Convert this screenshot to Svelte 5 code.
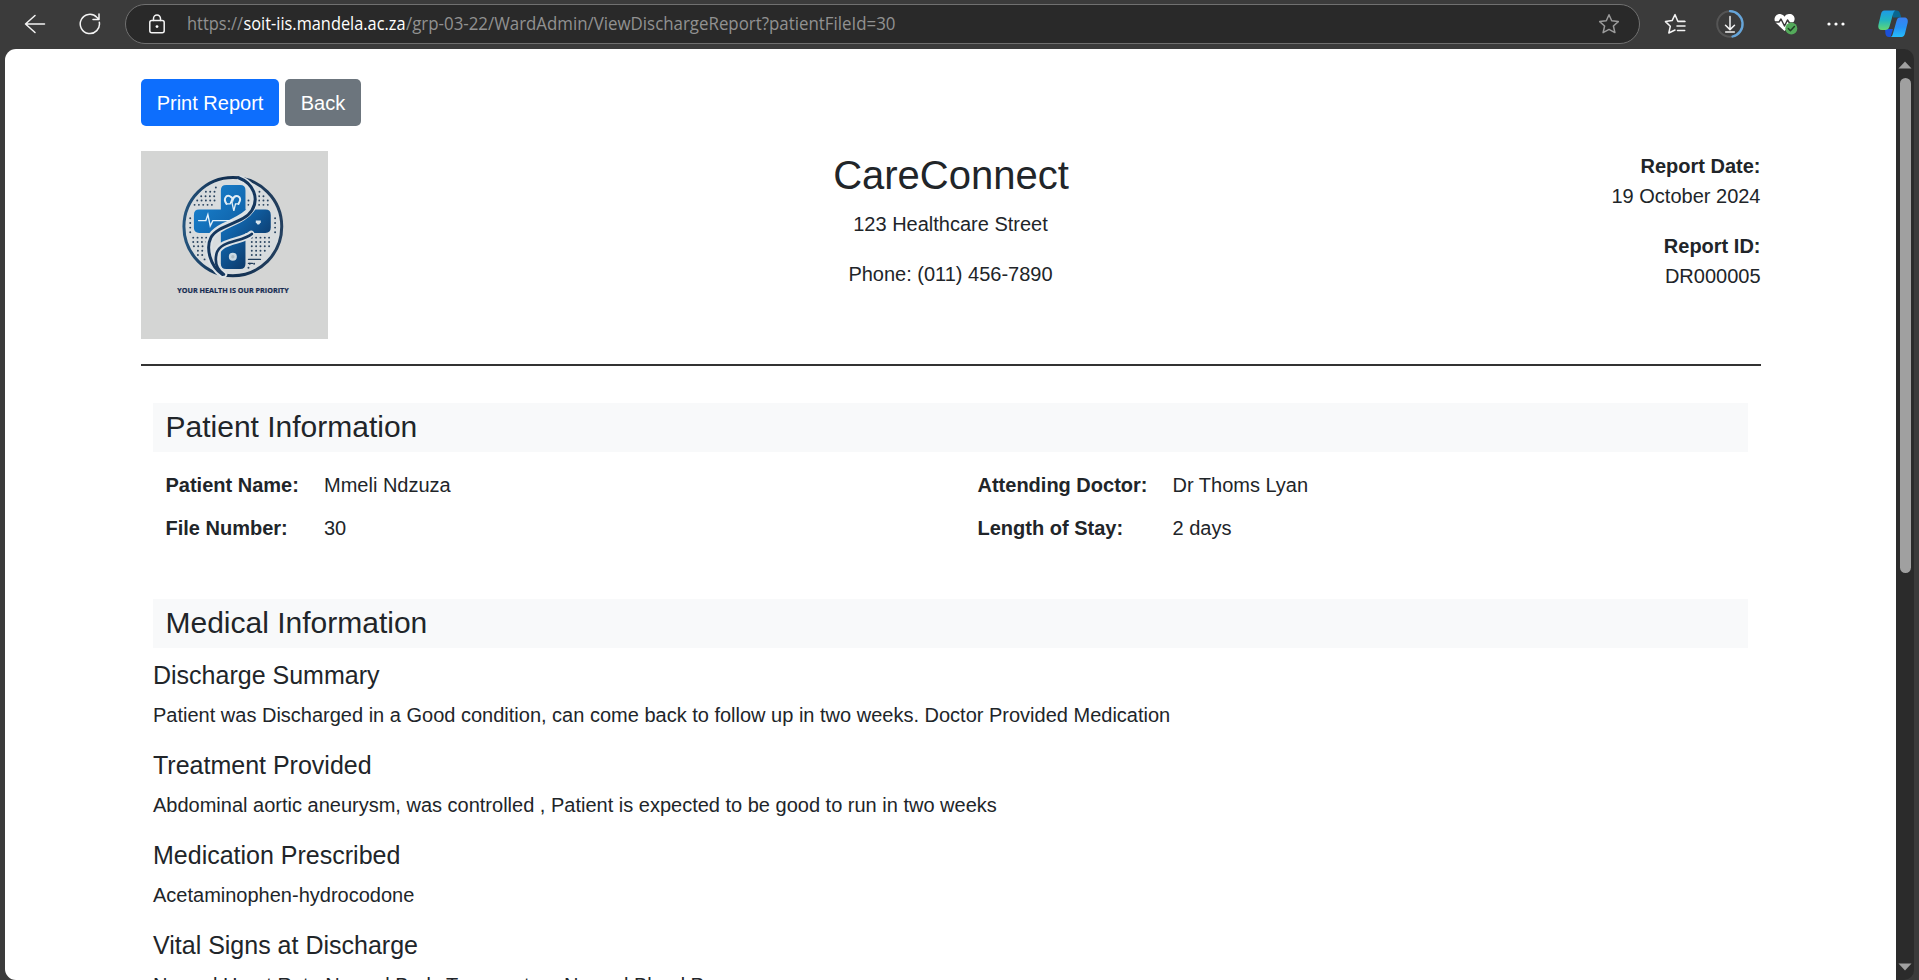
<script>
  const patient = [
    ['Patient Name:', 'Mmeli Ndzuza', 'Attending Doctor:', 'Dr Thoms Lyan'],
    ['File Number:', '30', 'Length of Stay:', '2 days'],
  ];
  const medical = [
    ['Discharge Summary', 'Patient was Discharged in a Good condition, can come back to follow up in two weeks. Doctor Provided Medication'],
    ['Treatment Provided', 'Abdominal aortic aneurysm, was controlled , Patient is expected to be good to run in two weeks'],
    ['Medication Prescribed', 'Acetaminophen-hydrocodone'],
    ['Vital Signs at Discharge', 'Normal Heart Rate,Normal Body Temperature,Normal Blood Pressure'],
  ];
  // dot rows of the emblem: [y, first x, last x]
  const dotRows = [
    [142, 258, 260], [155, 228, 258], [168, 214, 258], [181, 202, 258], [194, 194, 258],
    [155, 376, 392], [168, 388, 406], [181, 388, 420], [194, 388, 426], [181, 356, 358], [194, 356, 358],
    [234, 181, 182], [248, 181, 182], [262, 181, 182], [276, 181, 182],
    [234, 436, 437], [248, 436, 437], [262, 436, 437], [276, 436, 437],
    [292, 190, 235], [305, 190, 235], [318, 192, 228], [331, 204, 230], [344, 204, 218], [357, 224, 226],
    [292, 366, 426], [305, 366, 426], [318, 366, 426], [331, 366, 416], [344, 366, 404],
    [370, 360, 376], [382, 356, 358],
  ];
  const dots = dotRows.flatMap(([y, a, b]) => {
    const row = [];
    for (let x = a; x <= b; x += 13) row.push([x, y]);
    return row;
  });
</script>

<div class="browser">
  <header class="toolbar">
    <svg class="back" width="22" height="22" viewBox="0 0 22 22"><path d="M20.500 11H1.500M11 2.500 1.500 11 11 19.500" /></svg>
    <svg class="reload" width="22" height="22" viewBox="0 0 22 22"><path d="M20.3 9.2A9.6 9.6 0 1 1 17.8 4.300L19.800 6.200M20 1v5.500h-6" /></svg>
    <div class="address">
      <svg class="lock" width="18" height="20" viewBox="0 0 18 20"><rect x="1.8" y="6.5" width="14.4" height="12.3" rx="2" /><path d="M5.5 6.5V4.500a3.500 3.500 0 0 1 7 0v2" /><circle cx="9" cy="12.6" r="1.4" class="fill" /></svg>
      <svg class="url" width="720" height="38">
        <text x="0" y="24.5" textLength="56" lengthAdjust="spacingAndGlyphs">https://</text>
        <text x="56.5" y="24.5" textLength="162" lengthAdjust="spacingAndGlyphs" class="host">soit-iis.mandela.ac.za</text>
        <text x="219" y="24.5" textLength="489.5" lengthAdjust="spacingAndGlyphs">/grp-03-22/WardAdmin/ViewDischargeReport?patientFileId=30</text>
      </svg>
      <svg class="star" width="22" height="22" viewBox="0 0 22 22"><path d="M11 1.8 13.7 7.8 20.3 8.6 15.4 13 16.9 19.6 11 16.4 5.1 19.6 6.6 13 1.7 8.6 8.3 7.8Z" /></svg>
    </div>
    <div class="tools">
      <svg width="22" height="22" viewBox="0 0 22 22"><path d="M20.7 8.2H13.8L11 1.6 8.1 7.6 1.5 8.6 6.3 13.3 4.8 20 11 17M13 13h8M13.5 17.6h7.2M14 8.6h7" /></svg>
      <svg width="30" height="30" viewBox="0 0 30 30"><circle cx="15" cy="15" r="12.8" stroke="#555" stroke-width="2" /><path class="progress" d="M15 2.2a12.8 12.8 0 0 1 2.5 25.300" /><path d="M15 7.500v13M10.500 16.200 15 20.600l4.500-4.400M10.700 23h8.600" /></svg>
      <svg width="24" height="22" viewBox="0 0 24 22"><path class="fill" d="M10.500 18 2 10C-2 5 3 0 7 1.200c2 .4 3 1.700 3.500 2.500C11 2.500 12 1.500 14 1.200 19 0 23 5 19 10Z" /><path class="pulse" d="M0 9h5l2-3 3.500 7 3-6 2 3h5" /><circle class="badge" cx="17.3" cy="15.500" r="6" /><path class="tick" d="m14.300 15.500 2.100 2.200 4-4.100" /></svg>
      <svg width="18" height="6" viewBox="0 0 18 6"><g class="fill"><circle cx="2" cy="3" r="1.6" /><circle cx="9" cy="3" r="1.6" /><circle cx="16" cy="3" r="1.6" /></g></svg>
      <svg class="copilot" width="32" height="30" viewBox="0 0 32 30">
        <defs>
          <linearGradient id="c1" x1="0" y1="0" x2="0" y2="1"><stop offset="0" stop-color="#1d9be8" /><stop offset=".5" stop-color="#22b5c0" /><stop offset="1" stop-color="#62d872" /></linearGradient>
          <linearGradient id="c2" x1="0" y1="0" x2="0" y2="1"><stop offset="0" stop-color="#3b7ff0" /><stop offset=".5" stop-color="#2791f4" /><stop offset="1" stop-color="#25bdfb" /></linearGradient>
        </defs>
        <path d="M16 1.500h3.500c2 0 3 1 3.600 3L24.300 8.500H16Z" fill="#09668f" />
        <path d="M8 20h8l-2.500 8H12c-2 0-3-1-3.500-3Z" fill="#1b50d8" />
        <path d="M7.500 1.500H18.500c-1.300.5-1.800 1.500-2.300 3L12.500 17.500c-.8 2.500-2 3.500-4.500 3.500H5C2 21 .8 19 1.400 16L4 5c.6-2.300 1.400-3.500 3.500-3.500Z" fill="url(#c1)" />
        <path d="M23 8.500h4c3 0 4.300 2 3.700 5L28 24.500c-.6 2.300-1.500 3.500-3.600 3.500H13.500c1.500-.5 1.800-1.500 2.300-3l3.700-13c.7-2.500 1.500-3.500 3.500-3.500Z" fill="url(#c2)" />
      </svg>
    </div>
  </header>

  <div class="viewport">
    <main>
      <div class="actions"><button class="print">Print Report</button><button class="return">Back</button></div>
      <section class="masthead">
        <svg class="logo" viewBox="33 33 562 562" preserveAspectRatio="none">
          <defs>
            <linearGradient id="blue" x1="0" y1="0" x2="1" y2="1"><stop offset="0" stop-color="#1a86d4" /><stop offset=".5" stop-color="#1165ac" /><stop offset="1" stop-color="#0b2449" /></linearGradient>
            <linearGradient id="ring" x1="0" y1="0" x2="1" y2="0"><stop offset="0" stop-color="#25557e" /><stop offset=".4" stop-color="#102e50" /><stop offset="1" stop-color="#24405f" /></linearGradient>
          </defs>
          <rect x="33" y="33" width="562" height="562" fill="#d4d5d4" />
          <circle cx="309" cy="259" r="147" fill="#d8dcde" stroke="url(#ring)" stroke-width="9" />
          {#each dots as [x, y]}<circle cx={x} cy={y} r="2.9" fill="#29435f" />{/each}
          <path d="M289 135h42q16 0 16 16v57h60q16 0 16 16v38q0 16-16 16h-60v92q0 16-16 16h-42q-16 0-16-16v-92h-65q-16 0-16-16v-38q0-16 16-16h65v-57q0-16 16-16Z" fill="url(#blue)" />
          <g fill="none" stroke-linecap="round">
            <path d="M334 118C374 138 386 178 363 208C338 246 266 252 243 292C228 322 239 376 278 402" stroke="#dce2e6" stroke-width="22" />
            <path d="M364 281C335 306 271 298 260 340C253 370 263 389 282 402" stroke="#dce2e6" stroke-width="20" />
            <path d="M326 113C371 130 389 174 366 211C342 250 265 252 243 292C228 322 239 376 278 402" stroke="#15375e" stroke-width="9" />
            <path d="M366 281C337 306 271 298 260 340C253 370 263 389 282 402" stroke="#15375e" stroke-width="8" />
            <path d="M206 241h22l6-18 7 34 8-16h58" stroke="#e5f2fb" stroke-width="4" />
            <path d="M290 191C279 176 289 164 300 168Q307 170 309 178Q313 165 324 168Q337 174 326 191" stroke="#e2eef6" stroke-width="6" />
            <path d="M292 191h9l4-10 7 31 5-21h9" stroke="#e2eef6" stroke-width="4" />
            <path d="M356 357h36M356 369h12" stroke="#203d5c" stroke-width="4" />
          </g>
          <circle cx="309" cy="349" r="12" fill="#cbd9e3" /><circle cx="309" cy="349" r="5" fill="#aebcc5" />
          <path d="M378 241h15v5l-5 7h-5l-5-7Z" fill="#d8e5ed" />
          <text x="142" y="459" textLength="335" lengthAdjust="spacingAndGlyphs">YOUR HEALTH IS OUR PRIORITY</text>
        </svg>
        <div class="company"><h1>CareConnect</h1><p>123 Healthcare Street</p><p>Phone: (011) 456-7890</p></div>
        <div class="meta"><p><b>Report Date:</b><br />19 October 2024</p><p><b>Report ID:</b><br />DR000005</p></div>
      </section>

      <section class="block">
        <h2>Patient Information</h2>
        <div class="facts">
          {#each patient as row}
            {#each row as cell, i}
              <div class:label={i % 2 === 0}>{cell}</div>
            {/each}
          {/each}
        </div>
      </section>
      <section class="block medical">
        <h2>Medical Information</h2>
        {#each medical as [title, text]}
          <h3>{title}</h3>
          <p>{text}</p>
        {/each}
      </section>
    </main>
    <aside class="scrollbar">
      <svg width="14" height="8" viewBox="0 0 14 8"><path d="M.5 7.5 7 .5l6.500 7Z" /></svg>
      <div class="thumb"></div>
      <svg class="down" width="14" height="8" viewBox="0 0 14 8"><path d="M.5.5 7 7.500 13.500.5Z" /></svg>
    </aside>
  </div>
</div>

<style>
  :global(body) { margin: 0; background: #3b3b3b; overflow: hidden; }
  .browser { width: 1919px; height: 980px; overflow: hidden; display: flex; flex-direction: column; background: #3b3b3b; color: #212529; font: 20px/30px "Liberation Sans", Arial, sans-serif; box-sizing: border-box; }
  svg { display: block; flex: none; }
  .toolbar { height: 49px; flex: none; display: flex; align-items: center; padding: 0 10px 1px 24px; box-sizing: border-box; }
  .toolbar svg { fill: none; stroke: #f4f4f4; stroke-width: 1.5; stroke-linecap: round; stroke-linejoin: round; }
  .toolbar .fill { fill: #fff; stroke: none; }
  .toolbar .copilot { stroke: none; margin-left: 3px; }
  .progress { stroke: #65a5da; stroke-width: 2.3; }
  .pulse { stroke: #3b3b3b; }
  .badge { fill: #54aa5b; stroke: none; }
  .tick { stroke: #203e25; }
  .reload { margin-left: 33px; }
  .address { width: 1515px; height: 40px; box-sizing: border-box; margin-left: 24px; border: 1px solid #707070; border-radius: 20px; background: #292929; display: flex; align-items: center; padding: 0 19px 0 22px; }
  .url { margin-left: 20.5px; overflow: visible; }
  .toolbar .url text { fill: #919191; stroke: none; font: 17.5px "Open Sans", "Noto Sans", sans-serif; }
  .toolbar .url .host { fill: #fff; }
  .toolbar .star { margin-left: auto; stroke: #9a9a9a; }
  .tools { flex: 1; display: flex; align-items: center; justify-content: space-between; padding-left: 24px; }
  .viewport { flex: 1; min-height: 0; display: flex; padding-left: 5px; padding-right: 5px; }
  main { width: 1891px; box-sizing: border-box; background: #fff; border-radius: 11px 0 0 11px; padding: 30px 135px 0 136px; overflow: hidden; }
  .actions { display: flex; gap: 6px; height: 47px; }
  button { border: 0; border-radius: 5px; padding: 0; color: #fff; font: inherit; }
  .print { width: 138px; background: #0d6efd; }
  .return { width: 76px; background: #6c757d; }
  .masthead { margin-top: 25px; height: 213px; border-bottom: 2px solid #333; display: grid; grid-template-columns: 1fr 1fr 1fr; }
  .logo { width: 187px; height: 188px; }
  .logo text { font: 700 21px "Open Sans", sans-serif; fill: #172c52; stroke: #172c52; stroke-width: .6; }
  h1, h2, h3, p { margin: 0; font-weight: 400; }
  .company { text-align: center; }
  h1 { font-size: 40px; line-height: 48px; margin-bottom: 10px; }
  p { margin-bottom: 20px; }
  .company p { padding-right: 1px; }
  .meta { text-align: right; padding-right: .5px; }
  .block { margin: 37px 13px 0 12px; }
  h2 { height: 49px; line-height: 48px; background: #f8f9fa; font-size: 30px; padding-left: 12.5px; }
  .facts { display: grid; grid-template-columns: 158.5px 653.5px 195px 1fr; grid-auto-rows: 43px; line-height: 43px; padding: 12px 0 0 12.5px; }
  .label { font-weight: 700; }
  .medical { margin-top: 49px; }
  .medical h2 { margin-bottom: 12px; }
  h3 { font-size: 25px; line-height: 30px; margin-bottom: 10px; }
  .scrollbar { width: 18px; background: #2b2b2b; border-radius: 0 10px 10px 0; display: flex; flex-direction: column; align-items: center; padding: 12px 0 9px; box-sizing: border-box; }
  .scrollbar path { fill: #a0a0a0; }
  .thumb { width: 11px; height: 495px; margin-top: 9px; border-radius: 6px; background: #a0a0a0; }
  .down { margin-top: auto; }
</style>
